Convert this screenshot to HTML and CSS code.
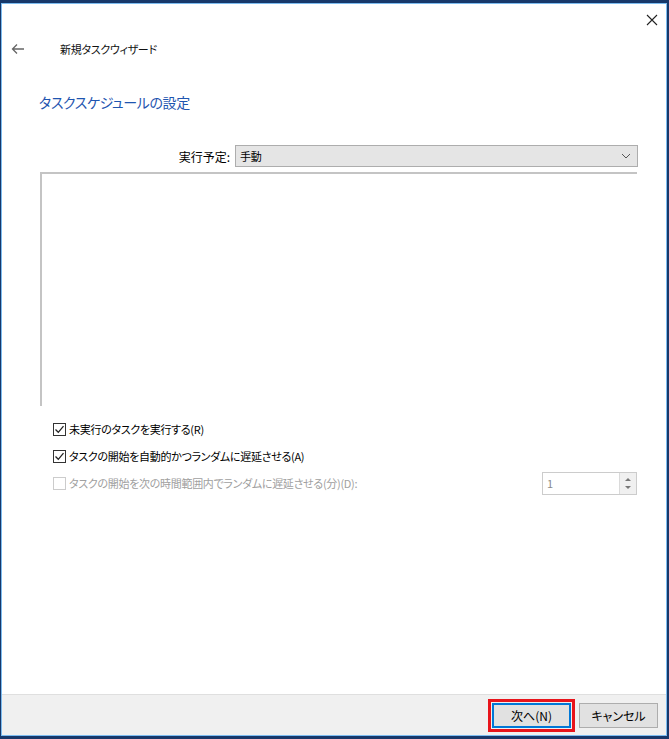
FILE: index.html
```html
<!DOCTYPE html>
<html lang="ja">
<head>
    <meta charset="UTF-8">
    <title>新規タスクウィザード</title>
    <link rel="stylesheet" href="styles.css">
</head>
<body>
    <div class="window">
        <div class="titlebar">
            <span class="close">
                <svg width="12" height="12" viewBox="0 0 12 12"><path d="M1 1 L11 11 M11 1 L1 11" stroke="#222" stroke-width="1.1"/></svg>
            </span>
        </div>

        <div class="nav">
            <span class="back">
                <svg width="14" height="12" viewBox="0 0 14 12"><path d="M13 6 H1.5 M6 1.5 L1.5 6 L6 10.5" stroke="#666" stroke-width="1.3" fill="none"/></svg>
            </span>
            <span class="wizard-title">新規タスクウィザード</span>
        </div>

        <h1 class="heading">タスクスケジュールの設定</h1>

        <div class="schedule-row">
            <label class="schedule-label">実行予定:</label>
            <div class="select">
                <span>手動</span>
                <svg width="10" height="6" viewBox="0 0 10 6"><path d="M1 1 L5 5 L9 1" stroke="#555" stroke-width="1" fill="none"/></svg>
            </div>
        </div>

        <div class="panel"></div>

        <div class="options">
            <div class="option">
                <span class="checkbox checked">
                    <svg width="11" height="11" viewBox="0 0 11 11"><path d="M1.5 5.5 L4.3 8.3 L9.5 2.2" stroke="#222" stroke-width="1.3" fill="none"/></svg>
                </span>
                <span>未実行のタスクを実行する(R)</span>
            </div>
            <div class="option">
                <span class="checkbox checked">
                    <svg width="11" height="11" viewBox="0 0 11 11"><path d="M1.5 5.5 L4.3 8.3 L9.5 2.2" stroke="#222" stroke-width="1.3" fill="none"/></svg>
                </span>
                <span>タスクの開始を自動的かつランダムに遅延させる(A)</span>
            </div>
            <div class="option disabled">
                <span class="checkbox"></span>
                <span class="option-text">タスクの開始を次の時間範囲内でランダムに遅延させる(分)(D):</span>
                <div class="spin">
                    <span class="spin-value">1</span>
                    <span class="spin-buttons">
                        <span class="spin-up"></span>
                        <span class="spin-down"></span>
                    </span>
                </div>
            </div>
        </div>

        <div class="footer">
            <div class="highlight">
                <button class="button default">次へ(N)</button>
            </div>
            <button class="button">キャンセル</button>
        </div>
    </div>
</body>
</html>
```

FILE: styles.css
```css
body {
    margin: 0;
    background: #17386a;
    font-family: "Noto Sans CJK JP", "Noto Sans", sans-serif;
    font-size: 11px;
    color: #000;
}
.window {
    box-sizing: border-box;
    width: 666px;
    height: 733px;
    margin: 3px 0 0 1px;
    border: 1px solid #7cbcf0;
    background: #fff;
    display: flex;
    flex-direction: column;
    font-feature-settings: "palt";
    letter-spacing: -0.3px;
}
.titlebar {
    height: 30px;
    display: flex;
    justify-content: flex-end;
    align-items: center;
    padding: 2px 8px 0 0;
    box-sizing: border-box;
}
.close {
    display: flex;
    width: 12px;
    height: 12px;
}
.nav {
    display: flex;
    align-items: center;
    height: 30px;
    padding-left: 9px;
}
.back {
    display: flex;
    width: 14px;
}
.wizard-title {
    margin-left: 35px;
    color: #111;
}
.heading {
    margin: 26px 0 0 37px;
    font-size: 14px;
    letter-spacing: -0.4px;
    font-weight: normal;
    color: #1f55b0;
    height: 24px;
    line-height: 24px;
}
.schedule-row {
    display: flex;
    align-items: center;
    margin: 31px 0 0 0;
    padding-left: 160px;
}
.schedule-label {
    width: 68px;
    text-align: right;
    margin-right: 5px;
    font-size: 12px;
    letter-spacing: 0;
}
.select {
    box-sizing: border-box;
    width: 403px;
    height: 22px;
    border: 1px solid #adadad;
    background: #e5e5e5;
    display: flex;
    align-items: center;
    justify-content: space-between;
    padding: 0 6px 0 4px;
}
.panel {
    box-sizing: border-box;
    margin: 5px 0 0 38px;
    width: 597px;
    height: 234px;
    border-top: 2px solid #c4c4c4;
    border-left: 2px solid #c4c4c4;
}
.options {
    margin: 14px 0 0 51px;
    display: flex;
    flex-direction: column;
    gap: 9px;
}
.option {
    display: flex;
    align-items: center;
    height: 18px;
}
.checkbox {
    box-sizing: border-box;
    width: 13px;
    height: 13px;
    border: 1px solid #333;
    background: #fff;
    margin-right: 3px;
    display: flex;
    align-items: center;
    justify-content: center;
}
.option.disabled {
    color: #a0a0a0;
}
.option.disabled .checkbox {
    border-color: #cccccc;
}
.option-text {
    flex: 1;
}
.spin {
    box-sizing: border-box;
    width: 95px;
    height: 23px;
    margin-right: 29px;
    border: 1px solid #cccccc;
    display: flex;
    align-items: center;
    color: #8a8a8a;
}
.spin-value {
    flex: 1;
    padding-left: 4px;
}
.spin-buttons {
    width: 16px;
    height: 21px;
    border-left: 1px solid #dadada;
    background: #f0f0f0;
    display: flex;
    flex-direction: column;
    align-items: center;
    justify-content: center;
    gap: 5px;
}
.spin-up {
    border-left: 3px solid transparent;
    border-right: 3px solid transparent;
    border-bottom: 3px solid #777;
}
.spin-down {
    border-left: 3px solid transparent;
    border-right: 3px solid transparent;
    border-top: 3px solid #777;
}
.footer {
    margin-top: auto;
    height: 41px;
    box-sizing: border-box;
    border-top: 1px solid #dfdfdf;
    background: #f0f0f0;
    display: flex;
    align-items: center;
    justify-content: flex-end;
    padding-right: 8px;
    gap: 4px;
}
.highlight {
    border: 3px solid #e8141b;
    padding: 1px;
}
.button {
    box-sizing: border-box;
    width: 79px;
    height: 25px;
    border: 1px solid #adadad;
    background: #e1e1e1;
    font-family: "Noto Sans CJK JP", "Noto Sans", sans-serif;
    font-size: 12px;
    font-feature-settings: "palt";
    padding: 0;
    color: #000;
}
.button.default {
    border: 2px solid #0078d7;
}
```
